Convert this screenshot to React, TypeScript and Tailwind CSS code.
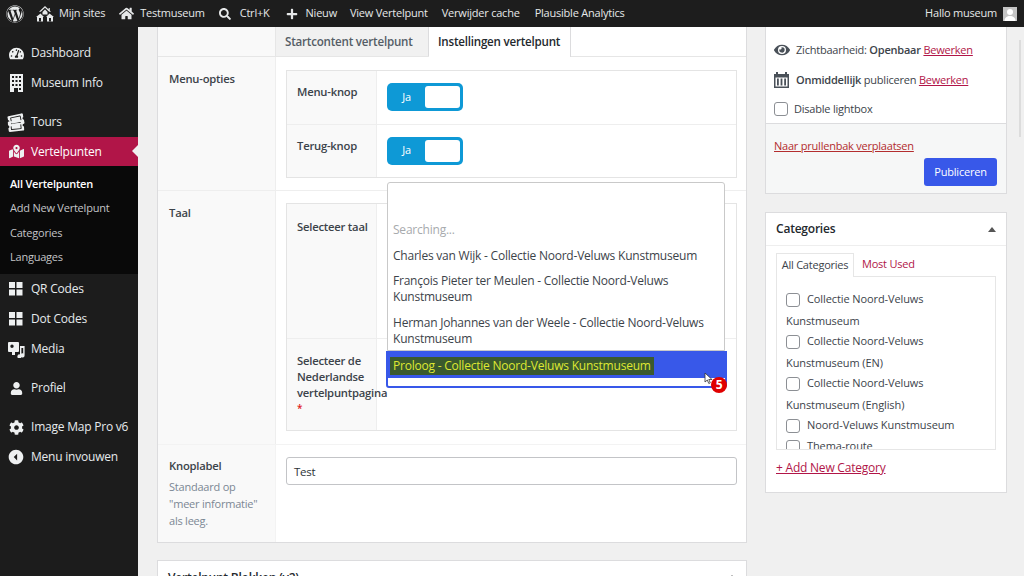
import { FaWordpress, FaHome, FaSearch, FaPlus, FaTachometerAlt, FaMapMarkedAlt, FaUser, FaCog, FaEye, FaTicketAlt } from "react-icons/fa";
import { IoMdArrowDropleftCircle } from "react-icons/io";
import { ReactNode } from "react";

const MultiSite = () => (
  <svg width="18" height="16" viewBox="0 0 18 16" fill="currentColor">
    <path d="M9 0l3.600 3.400V2h1.200v2.600L15 5.800h-1.800L9 1.800 4.800 5.800H3z" />
    <path d="M6.500 6L9 3.600 11.500 6v2.600h-5z" />
    <path d="M4.500 7.500L8 11H7v4.500H1V11H0z" />
    <path d="M13.500 7.500L18 11h-1v4.500h-6V11h-1z" />
    <rect x="3" y="12" width="2" height="3.500" fill="#1d1d1d" />
    <rect x="13" y="12" width="2" height="3.500" fill="#1d1d1d" />
  </svg>
);

const Grid = () => (
  <svg width="14" height="14" viewBox="0 0 14 14" fill="currentColor">
    <rect width="6" height="6" />
    <rect x="7.500" width="6" height="6" />
    <rect y="7.500" width="6" height="6" />
    <rect x="7.500" y="7.500" width="6" height="6" />
  </svg>
);

const Building = () => (
  <svg width="13" height="18" viewBox="0 0 13 18" fill="currentColor">
    <path d="M0 0h13v18H8v-4H4v4H0zM2 2v2h2V2zm3.500 0v2h2V2zM9 2v2h2V2zM2 6v2h2V6zm3.500 0v2h2V6zM9 6v2h2V6zM2 10v2h2v-2zm3.500 0v2h2v-2zM9 10v2h2v-2zM9 14v2h2v-2z" fillRule="evenodd" />
  </svg>
);

const MediaIcon = () => (
  <svg width="17" height="17" viewBox="0 0 17 17" fill="currentColor">
    <path d="M1 1h9a1 1 0 0 1 1 1v8a1 1 0 0 1-1 1H7v3H4v-3H1a1 1 0 0 1-1-1V2a1 1 0 0 1 1-1zm3 2.500a1.700 1.700 0 1 0 0 3.400 1.700 1.700 0 0 0 0-3.400z" fillRule="evenodd" />
    <path d="M12 5h4.600v9.400a2 2 0 1 1-1.400-1.900V7h-1.800v8.400a2 2 0 1 1-1.400-1.900z" />
  </svg>
);

const Calendar = () => (
  <svg width="15" height="16" viewBox="0 0 15 16" fill="#4a5159" className="mr-[7px]">
    <path d="M0 2h2V0h2v2h7V0h2v2h2v14H0zM1.500 5.500v9h12v-9z" fillRule="evenodd" />
    <path d="M3 6.500h1.800v7H3zM6.600 6.500h1.800v7H6.600zM10.200 6.500H12v7h-1.800z" />
  </svg>
);

const Tickets = () => (
  <span className="relative block w-[17px] h-[17px]">
    <FaTicketAlt size={16} className="absolute left-0 top-[-2px] -rotate-12" />
    <FaTicketAlt size={16} className="absolute left-0 top-[4px] -rotate-6" />
  </span>
);

const Avatar = () => (
  <svg width="14" height="14" viewBox="0 0 14 14">
    <rect width="14" height="14" fill="#c4c4c4" />
    <circle cx="7" cy="5" r="3" fill="#fff" />
    <path d="M1.500 14c0-3.500 2.500-5 5.500-5s5.500 1.500 5.500 5z" fill="#fff" />
  </svg>
);

const MenuItem = ({ icon, label, active }: { icon: ReactNode; label: string; active?: boolean }) => (
  <div className={`relative flex items-center ${active ? "h-[29px] bg-[#b11548] text-white" : "h-[30px] text-[#e6eaec]"}`}>
    <span className="w-[31px] flex justify-center pl-[1px] text-[#eef0f1]">{icon}</span>
    <span>{label}</span>
    {active && <span className="absolute right-0 top-[8px] border-y-[6px] border-r-[6px] border-y-transparent border-r-[#f0f0f0]" />}
  </div>
);

const Toggle = () => (
  <div className="w-[76px] h-[28px] rounded-[5px] bg-[#0e99d6] flex items-center p-[3px]">
    <span className="w-[35px] pr-[2px] text-center text-white text-[11px]">Ja</span>
    <span className="flex-1 self-stretch bg-white rounded-[3px]" />
  </div>
);

const Checkbox = () => <span className="inline-block w-[14px] h-[14px] rounded-[3px] border border-[#8c8f94] bg-white shrink-0" />;

const CategoryRow = ({ first, second }: { first: string; second?: string }) => (
  <div>
    <div className="flex items-center gap-[7px] h-[21px]">
      <Checkbox />
      <span>{first}</span>
    </div>
    {second && <div className="h-[21px] leading-[21px]">{second}</div>}
  </div>
);

export default function App() {
  return (
    <div className="w-[1024px] h-[576px] overflow-hidden flex flex-col bg-[#f0f0f0] text-[#3c434a] text-[12px] tracking-[-0.22px] font-['Open_Sans',sans-serif]">
      {/* admin bar */}
      <header className="h-[27px] shrink-0 bg-[#1d1d1d] text-[#e6e8e9] flex items-center justify-between pl-[6px] pr-[7px] text-[11px]">
        <div className="flex items-center">
          <FaWordpress size={18} className="mr-[12px]" />
          <MultiSite />
          <span className="ml-[5px]">Mijn sites</span>
          <FaHome size={15} className="ml-[14px]" />
          <span className="ml-[6px]">Testmuseum</span>
          <FaSearch size={12} className="ml-[14px]" />
          <span className="ml-[9px]">Ctrl+K</span>
          <FaPlus size={12} className="ml-[16px]" />
          <span className="ml-[8px]">Nieuw</span>
          <span className="ml-[13px]">View Vertelpunt</span>
          <span className="ml-[14px]">Verwijder cache</span>
          <span className="ml-[15px]">Plausible Analytics</span>
        </div>
        <div className="flex items-center gap-[6px]">
          <span>Hallo museum</span>
          <Avatar />
        </div>
      </header>

      <div className="flex flex-1 min-h-0">
        {/* sidebar */}
        <aside className="w-[138px] shrink-0 bg-[#1c1c1c] pt-[11px]">
          <MenuItem icon={<FaTachometerAlt size={15} />} label="Dashboard" />
          <MenuItem icon={<Building />} label="Museum Info" />
          <div className="h-[9px]" />
          <MenuItem icon={<Tickets />} label="Tours" />
          <MenuItem icon={<FaMapMarkedAlt size={15} />} label="Vertelpunten" active />
          <div className="bg-[#090909] h-[108px] pt-[5.500px] pl-[10px] text-[11px] text-[#c3c4c7]">
            <div className="h-[24.500px] leading-[24px] font-semibold text-white">All Vertelpunten</div>
            <div className="h-[24.500px] leading-[24px]">Add New Vertelpunt</div>
            <div className="h-[24.500px] leading-[24px]">Categories</div>
            <div className="h-[24.500px] leading-[24px]">Languages</div>
          </div>
          <MenuItem icon={<Grid />} label="QR Codes" />
          <MenuItem icon={<Grid />} label="Dot Codes" />
          <MenuItem icon={<MediaIcon />} label="Media" />
          <div className="h-[9px]" />
          <MenuItem icon={<FaUser size={13} />} label="Profiel" />
          <div className="h-[9px]" />
          <MenuItem icon={<FaCog size={15} />} label="Image Map Pro v6" />
          <MenuItem icon={<IoMdArrowDropleftCircle size={18} />} label="Menu invouwen" />
        </aside>

        {/* content */}
        <main className="flex-1 min-w-0 flex gap-[18px] pl-[19px] relative">
          <div className="w-[590px] shrink-0">
            <section className="relative bg-white border border-t-0 border-[#dcdcde] text-[11.250px]">
              <div className="flex h-[30px] border-b border-[#e6e6e6] text-[11.600px]">
                <div className="w-[118px] bg-[#f9f9f9] border-r border-[#e6e6e6]" />
                <div className="w-[153px] bg-[#f1f1f1] border-r border-[#dcdcde] flex items-center pl-[9px] text-[#555d66] font-semibold">Startcontent vertelpunt</div>
                <div className="w-[142px] h-[30px] bg-white border-r border-[#dcdcde] flex items-center pl-[9px] font-semibold text-[#23282d]">Instellingen vertelpunt</div>
              </div>

              <div className="flex h-[134px] border-b border-[#eeeeee]">
                <div className="w-[118px] bg-[#f9f9f9] border-r border-[#eeeeee] pl-[11px] pt-[14px] font-semibold">Menu-opties</div>
                <div className="flex-1 pt-[13px] pl-[10px] pr-[9px]">
                  <div className="border border-[#e4e4e4] h-[108px] flex flex-col">
                    <div className="flex flex-1 border-b border-[#eeeeee]">
                      <div className="w-[90px] bg-[#f9f9f9] border-r border-[#eeeeee] pl-[10px] pt-[13px] font-semibold">Menu-knop</div>
                      <div className="pl-[10px] pt-[12px]"><Toggle /></div>
                    </div>
                    <div className="flex flex-1">
                      <div className="w-[90px] bg-[#f9f9f9] border-r border-[#eeeeee] pl-[10px] pt-[13px] font-semibold">Terug-knop</div>
                      <div className="pl-[10px] pt-[12px]"><Toggle /></div>
                    </div>
                  </div>
                </div>
              </div>

              <div className="flex h-[254px] border-b border-[#f3f3f3]">
                <div className="w-[118px] bg-[#f9f9f9] border-r border-[#eeeeee] pl-[11px] pt-[14px] font-semibold">Taal</div>
                <div className="flex-1 pt-[12px] pl-[10px] pr-[9px]">
                  <div className="border border-[#e4e4e4] h-[228px] flex flex-col">
                    <div className="flex h-[135px] border-b border-[#eeeeee]">
                      <div className="w-[90px] bg-[#f9f9f9] border-r border-[#eeeeee] pl-[10px] pt-[15px] font-semibold">Selecteer taal</div>
                    </div>
                    <div className="flex flex-1">
                      <div className="w-[90px] bg-[#f9f9f9] border-r border-[#eeeeee] pl-[10px] pt-[14px] font-semibold leading-[16px]">
                        Selecteer de Nederlandse vertelpuntpagina
                        <div className="text-[#e02020] text-[10px] leading-[14px]">*</div>
                      </div>
                    </div>
                  </div>
                </div>
              </div>

              <div className="flex h-[97px]">
                <div className="w-[118px] bg-[#f9f9f9] border-r border-[#f3f3f3] pl-[11px] pt-[13px]">
                  <div className="font-semibold">Knoplabel</div>
                  <div className="mt-[3px] text-[11px] text-[#7b8794] leading-[17px]">
                    <div>Standaard op</div>
                    <div>"meer informatie"</div>
                    <div>als leeg.</div>
                  </div>
                </div>
                <div className="flex-1 pt-[12px] pl-[10px] pr-[9px]">
                  <div className="h-[28px] border border-[#c3c4c7] rounded-[3px] flex items-center px-[7px] pt-[1px] text-[11.500px] text-[#2c3338]">Test</div>
                </div>
              </div>

              {/* open dropdown over the form */}
              <div className="absolute left-[228px] top-[155px] w-[341px] z-10 text-[12px]">
                <div className="ml-[1px] w-[338px] bg-white border border-[#c9c9c9] rounded-t-[3px]">
                  <div className="h-[34px]" />
                  <div className="px-[5px] leading-[16px]">
                    <div className="h-[26px] leading-[26px] text-[#a7aaad]">Searching...</div>
                    <div className="h-[26px] leading-[26px]">Charles van Wijk - Collectie Noord-Veluws Kunstmuseum</div>
                    <div className="pt-[4px] pb-[5px]">François Pieter ter Meulen - Collectie Noord-Veluws Kunstmuseum</div>
                    <div className="pt-[5px] pb-[3px]">Herman Johannes van der Weele - Collectie Noord-Veluws Kunstmuseum</div>
                  </div>
                </div>
                <div className="border-2 border-[#3858e9] rounded-b-[3px] bg-white h-[37px]">
                  <div className="bg-[#3858e9] h-[25px] pl-[2px] pt-[4px]">
                    <span className="block w-fit h-[18px] leading-[18px] px-[3px] bg-[#3b5a2d] text-[#dfe832]">Proloog - Collectie Noord-Veluws Kunstmuseum</span>
                  </div>
                </div>
                <svg className="absolute right-[14px] top-[190px]" width="9" height="13" viewBox="0 0 9 13">
                  <path d="M1 1v9l2.300-2 1.500 3.500 1.500-.7L4.800 7.500H8z" fill="#fff" stroke="#333" strokeWidth="0.800" />
                </svg>
                <span className="absolute right-0 top-[195px] w-[16px] h-[16px] rounded-full bg-[#e00000] text-white text-[12px] font-bold flex items-center justify-center">5</span>
              </div>
            </section>

            <section className="mt-[17px] h-[60px] bg-white border border-[#dcdcde] pl-[10px] pt-[8px] relative font-semibold text-[#23282d]">
              Vertelpunt Blokken (v2)
              <span className="absolute right-[11px] top-[14px] border-x-[3px] border-b-[4px] border-x-transparent border-b-[#555]" />
            </section>
          </div>

          <div className="w-[242px] shrink-0 text-[11px]">
            <section className="bg-white border border-t-0 border-[#dcdcde] h-[167px]">
              <div className="h-[96px] pl-[8px] pt-[13px]">
                <div className="flex items-center h-[20px]">
                  <FaEye size={16} className="text-[#4a5159] mr-[6px]" />
                  <span>Zichtbaarheid: <b className="font-semibold">Openbaar</b> <span className="text-[#b11548] underline">Bewerken</span></span>
                </div>
                <div className="flex items-center h-[20px] mt-[10px]">
                  <Calendar />
                  <span><b className="font-semibold">Onmiddellijk</b> publiceren <span className="text-[#b11548] underline">Bewerken</span></span>
                </div>
                <div className="flex items-center h-[20px] mt-[9px] gap-[6px]">
                  <Checkbox />
                  <span>Disable lightbox</span>
                </div>
              </div>
              <div className="h-[70px] bg-[#f6f7f7] border-t border-[#dcdcde] pl-[8px] pr-[9px] pt-[14px]">
                <div className="text-[#b32d2e] underline leading-[16px]">Naar prullenbak verplaatsen</div>
                <div className="flex justify-end mt-[4px]">
                  <span className="w-[73px] h-[28px] rounded-[3px] bg-[#3858e9] text-white flex items-center justify-center">Publiceren</span>
                </div>
              </div>
            </section>

            <section className="mt-[18px] h-[281px] bg-white border border-[#dcdcde]">
              <div className="h-[33px] border-b border-[#eeeeee] flex items-center justify-between pl-[10px] pr-[10px] font-semibold text-[#23282d] text-[12px]">
                Categories
                <span className="border-x-[4px] border-b-[5px] border-x-transparent border-b-[#555]" />
              </div>
              <div className="px-[10px] pt-[7px]">
                <div className="flex h-[24px]">
                  <span className="w-[78px] h-[24px] pb-[1px] border border-b-0 border-[#e6e6e6] bg-white flex items-center justify-center relative z-10 whitespace-nowrap">All Categories</span>
                  <span className="ml-[8px] pb-[1px] flex items-center text-[#b11548]">Most Used</span>
                </div>
                <div className="-mt-px h-[174px] border border-[#e6e6e6] pl-[9px] pt-[12px] overflow-hidden tracking-[-0.1px]">
                  <CategoryRow first="Collectie Noord-Veluws" second="Kunstmuseum" />
                  <CategoryRow first="Collectie Noord-Veluws" second="Kunstmuseum (EN)" />
                  <CategoryRow first="Collectie Noord-Veluws" second="Kunstmuseum (English)" />
                  <CategoryRow first="Noord-Veluws Kunstmuseum" />
                  <CategoryRow first="Thema-route" />
                </div>
                <div className="mt-[9px] text-[#b11548] text-[12px] underline font-medium">+ Add New Category</div>
              </div>
            </section>
          </div>

          {/* page scrollbar */}
          <span className="absolute right-[3px] top-[13px] w-[2px] h-[97px] bg-[#dcdcdc]" />
        </main>
      </div>
    </div>
  );
}
